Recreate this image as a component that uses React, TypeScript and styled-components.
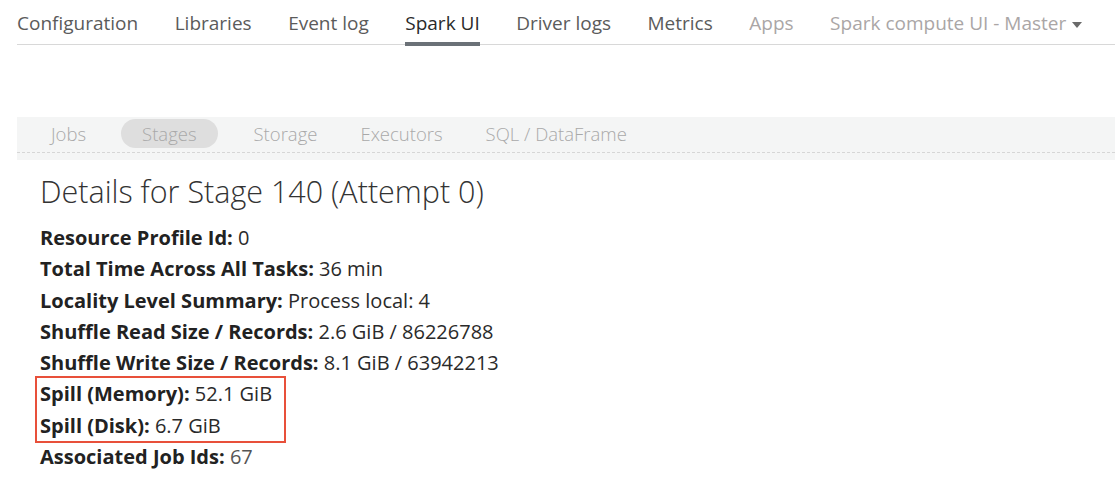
import React from "react";
import styled, { createGlobalStyle } from "styled-components";

const Global = createGlobalStyle`
  html, body { margin: 0; padding: 0; background: #fff; }
  body { font-family: "Open Sans", "Noto Sans", sans-serif; }
`;

const Page = styled.div`
  width: 1115px;
  height: 490px;
  overflow: hidden;
  background: #fff;
`;

const TopNav = styled.nav`
  display: flex;
  align-items: flex-end;
  gap: 36.5px;
  margin-left: 17px;
  height: 44px;
  border-bottom: 1px solid #d8d8d8;
`;

const TopTab = styled.div<{ $active?: boolean; $muted?: boolean }>`
  position: relative;
  font-size: 19px;
  line-height: 26px;
  padding-bottom: 8px;
  white-space: nowrap;
  color: ${(p) => (p.$active ? "#2a2a2a" : p.$muted ? "#aaa6a6" : "#5b5b5b")};
  display: flex;
  align-items: center;
  gap: 6px;
  &::after {
    content: "";
    display: ${(p) => (p.$active ? "block" : "none")};
    position: absolute;
    left: 0;
    right: 0;
    bottom: -2px;
    height: 4px;
    background: #6b7177;
  }
`;

const Caret = styled.span`
  width: 0;
  height: 0;
  border-left: 5px solid transparent;
  border-right: 5px solid transparent;
  border-top: 6px solid #6a6a6a;
  margin-top: 3px;
`;

const SubBand = styled.div`
  margin: 72px 0 0 17px;
  height: 43px;
  background: #f4f5f5;
  display: flex;
  flex-direction: column;
`;

const SubNav = styled.div`
  display: flex;
  align-items: center;
  box-sizing: border-box;
  height: 36px;
  padding: 0 0 3px 34px;
  gap: 43px;
  border-bottom: 1px dashed #d6d6d6;
`;

const SubTab = styled.div<{ $active?: boolean }>`
  font-size: 18.5px;
  font-weight: 300;
  color: #a9a9a9;
  height: 29px;
  line-height: 29px;
  padding: 0 ${(p) => (p.$active ? "21px" : "0")};
  margin: ${(p) => (p.$active ? "0 -7px 0 -8px" : "0")};
  border-radius: 15px;
  background: ${(p) => (p.$active ? "#dedede" : "transparent")};
  white-space: nowrap;
`;

const Content = styled.div`
  padding-left: 40px;
`;

const Heading = styled.h3`
  margin: 11px 0 11px;
  font-size: 30.5px;
  font-weight: 300;
  color: #333;
  line-height: 40px;
`;

const List = styled.div`
  display: flex;
  flex-direction: column;
  align-items: flex-start;
`;

const Row = styled.div`
  font-size: 20px;
  line-height: 31.3px;
  color: #222;
  white-space: nowrap;
`;

const Label = styled.strong`
  font-weight: 700;
`;

const Value = styled.span<{ $muted?: boolean }>`
  color: ${(p) => (p.$muted ? "#555" : "#2a2a2a")};
`;

const Highlight = styled.div`
  margin: -2px 0 -2px -5px;
  padding: 0 12px 0 3px;
  border: 2px solid #e8503a;
  display: flex;
  flex-direction: column;
`;

const topTabs = [
  { t: "Configuration" },
  { t: "Libraries" },
  { t: "Event log" },
  { t: "Spark UI", active: true },
  { t: "Driver logs" },
  { t: "Metrics" },
  { t: "Apps", muted: true },
];

const subTabs = ["Jobs", "Stages", "Storage", "Executors", "SQL / DataFrame"];

export default function App() {
  return (
    <Page>
      <Global />
      <TopNav>
        {topTabs.map((x) => (
          <TopTab key={x.t} $active={x.active} $muted={x.muted}>
            {x.t}
          </TopTab>
        ))}
        <TopTab $muted>
          Spark compute UI - Master <Caret />
        </TopTab>
      </TopNav>
      <SubBand>
        <SubNav>
          {subTabs.map((s) => (
            <SubTab key={s} $active={s === "Stages"}>
              {s}
            </SubTab>
          ))}
        </SubNav>
      </SubBand>
      <Content>
        <Heading>Details for Stage 140 (Attempt 0)</Heading>
        <List>
          <Row><Label>Resource Profile Id:</Label> <Value>0</Value></Row>
          <Row><Label>Total Time Across All Tasks:</Label> <Value>36 min</Value></Row>
          <Row><Label>Locality Level Summary:</Label> <Value>Process local: 4</Value></Row>
          <Row><Label>Shuffle Read Size / Records:</Label> <Value>2.6 GiB / 86226788</Value></Row>
          <Row><Label>Shuffle Write Size / Records:</Label> <Value>8.1 GiB / 63942213</Value></Row>
          <Highlight>
            <Row><Label>Spill (Memory):</Label> <Value>52.1 GiB</Value></Row>
            <Row><Label>Spill (Disk):</Label> <Value>6.7 GiB</Value></Row>
          </Highlight>
          <Row><Label>Associated Job Ids:</Label> <Value $muted>67</Value></Row>
        </List>
      </Content>
    </Page>
  );
}
